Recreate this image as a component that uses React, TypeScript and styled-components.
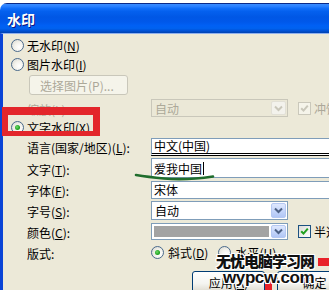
import React from "react";
import styled, { createGlobalStyle, css } from "styled-components";

const GlobalStyle = createGlobalStyle`
  html, body { margin: 0; padding: 0; background: #fff; }
  body {
    font-family: "Noto Sans CJK SC", "Noto Sans", sans-serif;
    font-size: 12px;
    color: #000;
  }
`;

const FONT = `"Noto Sans CJK SC", "Noto Sans", sans-serif`;

const Page = styled.div`
  position: relative;
  width: 329px;
  height: 290px;
  overflow: hidden;
  padding-top: 3px;
  box-sizing: border-box;
`;

const Win = styled.div`
  width: 360px;
  height: 100%;
  border-top-left-radius: 7px;
  overflow: hidden;
  display: flex;
  flex-direction: column;
`;

const TitleBar = styled.div`
  height: 30px;
  flex: none;
  box-sizing: border-box;
  border-top: 1px solid #0a2a8a;
  background: linear-gradient(
    to bottom,
    #3a8cff 0%,
    #2a80ff 8%,
    #0f6cf8 16%,
    #0460ee 26%,
    #0057e5 45%,
    #0058ea 62%,
    #0060f4 74%,
    #0062f0 84%,
    #0052d6 92%,
    #0042b0 100%
  );
  display: flex;
  align-items: center;
  padding-left: 7px;
  color: #fff;
  font-weight: bold;
  font-size: 14px;
  text-shadow: 1px 1px 0 #0a1883;
`;

const Body = styled.div`
  flex: 1;
  background: #ece9d8;
  border-left: 3px solid #0a44d6;
  border-top: 1px solid #8fb0ee;
  display: flex;
  flex-direction: column;
  padding-top: 2px;
`;

const OptionRow = styled.div<{ $h: number }>`
  height: ${(p) => p.$h}px;
  display: flex;
  align-items: center;
  padding-left: 8px;
  gap: 3px;
`;

const FieldRow = styled.div<{ $h: number; $top?: number }>`
  height: ${(p) => p.$h}px;
  margin-top: ${(p) => p.$top ?? 0}px;
  display: flex;
  align-items: center;
`;

const Label = styled.div<{ $disabled?: boolean }>`
  width: 148px;
  flex: none;
  box-sizing: border-box;
  padding-left: 24px;
  padding-top: 2px;
  white-space: nowrap;
  color: ${(p) => (p.$disabled ? "#aca899" : "#000")};
`;

const Text = styled.span<{ $disabled?: boolean }>`
  white-space: nowrap;
  color: ${(p) => (p.$disabled ? "#aca899" : "#000")};
`;

const RadioCircle = styled.span<{ $checked?: boolean }>`
  width: 13px;
  height: 13px;
  flex: none;
  box-sizing: border-box;
  border-radius: 50%;
  border: 1px solid #4a6a8c;
  background: radial-gradient(circle at 65% 65%, #ffffff 0%, #f3f2ec 45%, #d4d3cb 100%);
  display: inline-flex;
  align-items: center;
  justify-content: center;
  &::after {
    content: "";
    width: 5px;
    height: 5px;
    border-radius: 50%;
    background: radial-gradient(circle at 40% 40%, #6ddc68 0%, #21a121 60%, #178a17 100%);
    display: ${(p) => (p.$checked ? "block" : "none")};
  }
`;

const DisabledButton = styled.div`
  margin-top: 1px;
  margin-left: 26px;
  width: 99px;
  height: 20px;
  box-sizing: border-box;
  border: 1px solid #c9c7ba;
  border-radius: 3px;
  background: #f5f4ea;
  color: #aca899;
  display: flex;
  align-items: center;
  padding-left: 10px;
`;

const Combo = styled.div<{ $disabled?: boolean; $h?: number }>`
  width: 137px;
  height: ${(p) => p.$h ?? 19}px;
  flex: none;
  box-sizing: border-box;
  border: 1px solid ${(p) => (p.$disabled ? "#c9c7ba" : "#7f9db9")};
  background: ${(p) => (p.$disabled ? "#ebe8d7" : "#fff")};
  color: ${(p) => (p.$disabled ? "#aca899" : "#000")};
  display: flex;
  align-items: stretch;
  padding: 1px;
  gap: 2px;
`;

const ComboText = styled.div`
  flex: 1;
  display: flex;
  align-items: center;
  padding-left: 2px;
`;

const Swatch = styled.div`
  flex: 1;
  margin: 1px 0 1px 1px;
  background: #a3a3a3;
`;

const ComboButton = styled.div<{ $disabled?: boolean }>`
  width: 15px;
  flex: none;
  box-sizing: border-box;
  border-radius: 2px;
  border: 1px solid ${(p) => (p.$disabled ? "#e2e0d6" : "#b5c8f2")};
  background: ${(p) =>
    p.$disabled ? "#f3f2ec" : "linear-gradient(to bottom, #dfe8fe 0%, #c4d5fa 55%, #b1c6f5 100%)"};
  display: flex;
  align-items: center;
  justify-content: center;
`;

const TextField = styled.div<{ $double?: boolean; $h: number }>`
  width: 200px;
  height: ${(p) => p.$h}px;
  flex: none;
  box-sizing: border-box;
  border: 1px solid #7f9db9;
  background: #fff;
  display: flex;
  align-items: center;
  padding-left: 2px;
  ${(p) =>
    p.$double &&
    css`
      border-bottom: 3px double #000;
    `}
`;

const Caret = styled.span`
  display: inline-block;
  width: 1px;
  height: 13px;
  background: #000;
  margin-left: 1px;
`;

const CheckBox = styled.span<{ $disabled?: boolean }>`
  width: 13px;
  height: 13px;
  flex: none;
  box-sizing: border-box;
  border: 1px solid ${(p) => (p.$disabled ? "#cac8bb" : "#1c5180")};
  background: ${(p) =>
    p.$disabled ? "#f5f4ea" : "linear-gradient(135deg, #dcdcd7 0%, #ffffff 100%)"};
  display: inline-flex;
  align-items: center;
  justify-content: center;
`;

const CheckGroup = styled.div`
  display: flex;
  align-items: center;
  gap: 3px;
  margin-left: 10px;
`;

const RadioGroup = styled.div<{ $gap?: number }>`
  display: flex;
  align-items: center;
  gap: 4px;
  margin-right: ${(p) => p.$gap ?? 0}px;
`;

const ButtonRow = styled.div`
  display: flex;
  gap: 12px;
  padding-left: 189px;
  margin-top: 8px;
`;

const XPButton = styled.button<{ $w: number }>`
  width: ${(p) => p.$w}px;
  height: 23px;
  flex: none;
  box-sizing: border-box;
  border: 1px solid #003c74;
  border-radius: 3px;
  background: linear-gradient(to bottom, #ffffff 0%, #f4f4f0 55%, #e3e0d6 85%, #d6d0c5 100%);
  font-family: ${FONT};
  font-size: 12px;
  color: #000;
  padding: 0;
`;

const RedFrame = styled.div`
  position: absolute;
  left: 2px;
  top: 107px;
  width: 98px;
  height: 29px;
  box-sizing: border-box;
  border-style: solid;
  border-color: #e3262b;
  border-width: 8px 7px 5px 6px;
  pointer-events: none;
`;

const Scribble = styled.svg`
  position: absolute;
  left: 134px;
  top: 170px;
  pointer-events: none;
`;

const Watermark = styled.div`
  position: absolute;
  left: 216px;
  top: 252px;
  display: flex;
  flex-direction: column;
  align-items: flex-start;
  pointer-events: none;
`;

const outline = css`
  text-shadow: -1px -1px 0 #fff, 1px -1px 0 #fff, -1px 1px 0 #fff, 1px 1px 0 #fff,
    0 -1px 0 #fff, 0 1px 0 #fff, -1px 0 0 #fff, 1px 0 0 #fff;
`;

const WmTitle = styled.div`
  font-family: ${FONT};
  font-weight: 900;
  font-size: 15px;
  line-height: 18px;
  letter-spacing: -1px;
  color: #111;
  white-space: nowrap;
  ${outline}
`;

const WmUrl = styled.div`
  font-family: "Liberation Sans", Arial, sans-serif;
  font-weight: bold;
  font-size: 17px;
  line-height: 16px;
  letter-spacing: -0.4px;
  margin-left: 7px;
  color: #111;
  white-space: nowrap;
  ${outline}
`;

const RedMark = styled.div<{ $l: number; $t: number; $w: number; $h: number }>`
  position: absolute;
  left: ${(p) => p.$l}px;
  top: ${(p) => p.$t}px;
  width: ${(p) => p.$w}px;
  height: ${(p) => p.$h}px;
  background: #e8222a;
  pointer-events: none;
`;

const Chevron: React.FC<{ color: string }> = ({ color }) => (
  <svg width="9" height="7" viewBox="0 0 9 7">
    <path d="M1 1.5 L4.5 5 L8 1.5" fill="none" stroke={color} strokeWidth="2" />
  </svg>
);

const Tick: React.FC<{ color: string }> = ({ color }) => (
  <svg width="9" height="9" viewBox="0 0 9 9">
    <path d="M1.2 4.2 L3.5 6.6 L7.8 1.6" fill="none" stroke={color} strokeWidth="2" />
  </svg>
);

const App: React.FC = () => {
  return (
    <Page>
      <GlobalStyle />
      <Win>
        <TitleBar>水印</TitleBar>
        <Body>
          <OptionRow $h={19}>
            <RadioCircle />
            <Text>
              无水印(<u>N</u>)
            </Text>
          </OptionRow>
          <OptionRow $h={19}>
            <RadioCircle />
            <Text>
              图片水印(<u>I</u>)
            </Text>
          </OptionRow>
          <DisabledButton>选择图片(P)...</DisabledButton>
          <FieldRow $h={22} $top={2}>
            <Label $disabled>缩放(L):</Label>
            <Combo $disabled $h={18}>
              <ComboText>自动</ComboText>
              <ComboButton $disabled>
                <Chevron color="#c9c7ba" />
              </ComboButton>
            </Combo>
            <CheckGroup>
              <CheckBox $disabled>
                <Tick color="#c9c7ba" />
              </CheckBox>
              <Text $disabled>冲蚀(W)</Text>
            </CheckGroup>
          </FieldRow>
          <OptionRow $h={17}>
            <RadioCircle $checked />
            <Text>
              文字水印(<u>X</u>)
            </Text>
          </OptionRow>
          <FieldRow $h={21}>
            <Label>
              语言(国家/地区)(<u>L</u>):
            </Label>
            <TextField $double $h={18}>
              中文(中国)
            </TextField>
          </FieldRow>
          <FieldRow $h={22}>
            <Label>
              文字(<u>T</u>):
            </Label>
            <TextField $h={20}>
              爱我中国
              <Caret />
            </TextField>
          </FieldRow>
          <FieldRow $h={21}>
            <Label>
              字体(<u>F</u>):
            </Label>
            <TextField $h={18}>宋体</TextField>
          </FieldRow>
          <FieldRow $h={21}>
            <Label>
              字号(<u>S</u>):
            </Label>
            <Combo>
              <ComboText>自动</ComboText>
              <ComboButton>
                <Chevron color="#4d6185" />
              </ComboButton>
            </Combo>
          </FieldRow>
          <FieldRow $h={21}>
            <Label>
              颜色(<u>C</u>):
            </Label>
            <Combo $h={17}>
              <Swatch />
              <ComboButton>
                <Chevron color="#4d6185" />
              </ComboButton>
            </Combo>
            <CheckGroup>
              <CheckBox>
                <Tick color="#21a121" />
              </CheckBox>
              <Text>半透明(E)</Text>
            </CheckGroup>
          </FieldRow>
          <FieldRow $h={21}>
            <Label>版式:</Label>
            <RadioGroup $gap={10}>
              <RadioCircle $checked />
              <Text>
                斜式(<u>D</u>)
              </Text>
            </RadioGroup>
            <RadioGroup>
              <RadioCircle />
              <Text>
                水平(<u>H</u>)
              </Text>
            </RadioGroup>
          </FieldRow>
          <ButtonRow>
            <XPButton $w={73}>
              应用(<u>A</u>)
            </XPButton>
            <XPButton $w={75}>确定</XPButton>
          </ButtonRow>
        </Body>
      </Win>

      <RedFrame />
      <Scribble width="84" height="14" viewBox="0 0 84 14">
        <path
          d="M2 5 Q14 7 30 8.5 Q52 10.5 79 6.5"
          fill="none"
          stroke="#1f6d2c"
          strokeWidth="2.6"
          strokeLinecap="round"
        />
      </Scribble>
      <RedMark $l={265} $t={280} $w={7} $h={10} />
      <RedMark $l={318} $t={258} $w={11} $h={8} />
      <Watermark>
        <WmTitle>无忧电脑学习网</WmTitle>
        <WmUrl>wypcw.com</WmUrl>
      </Watermark>
    </Page>
  );
};

export default App;
